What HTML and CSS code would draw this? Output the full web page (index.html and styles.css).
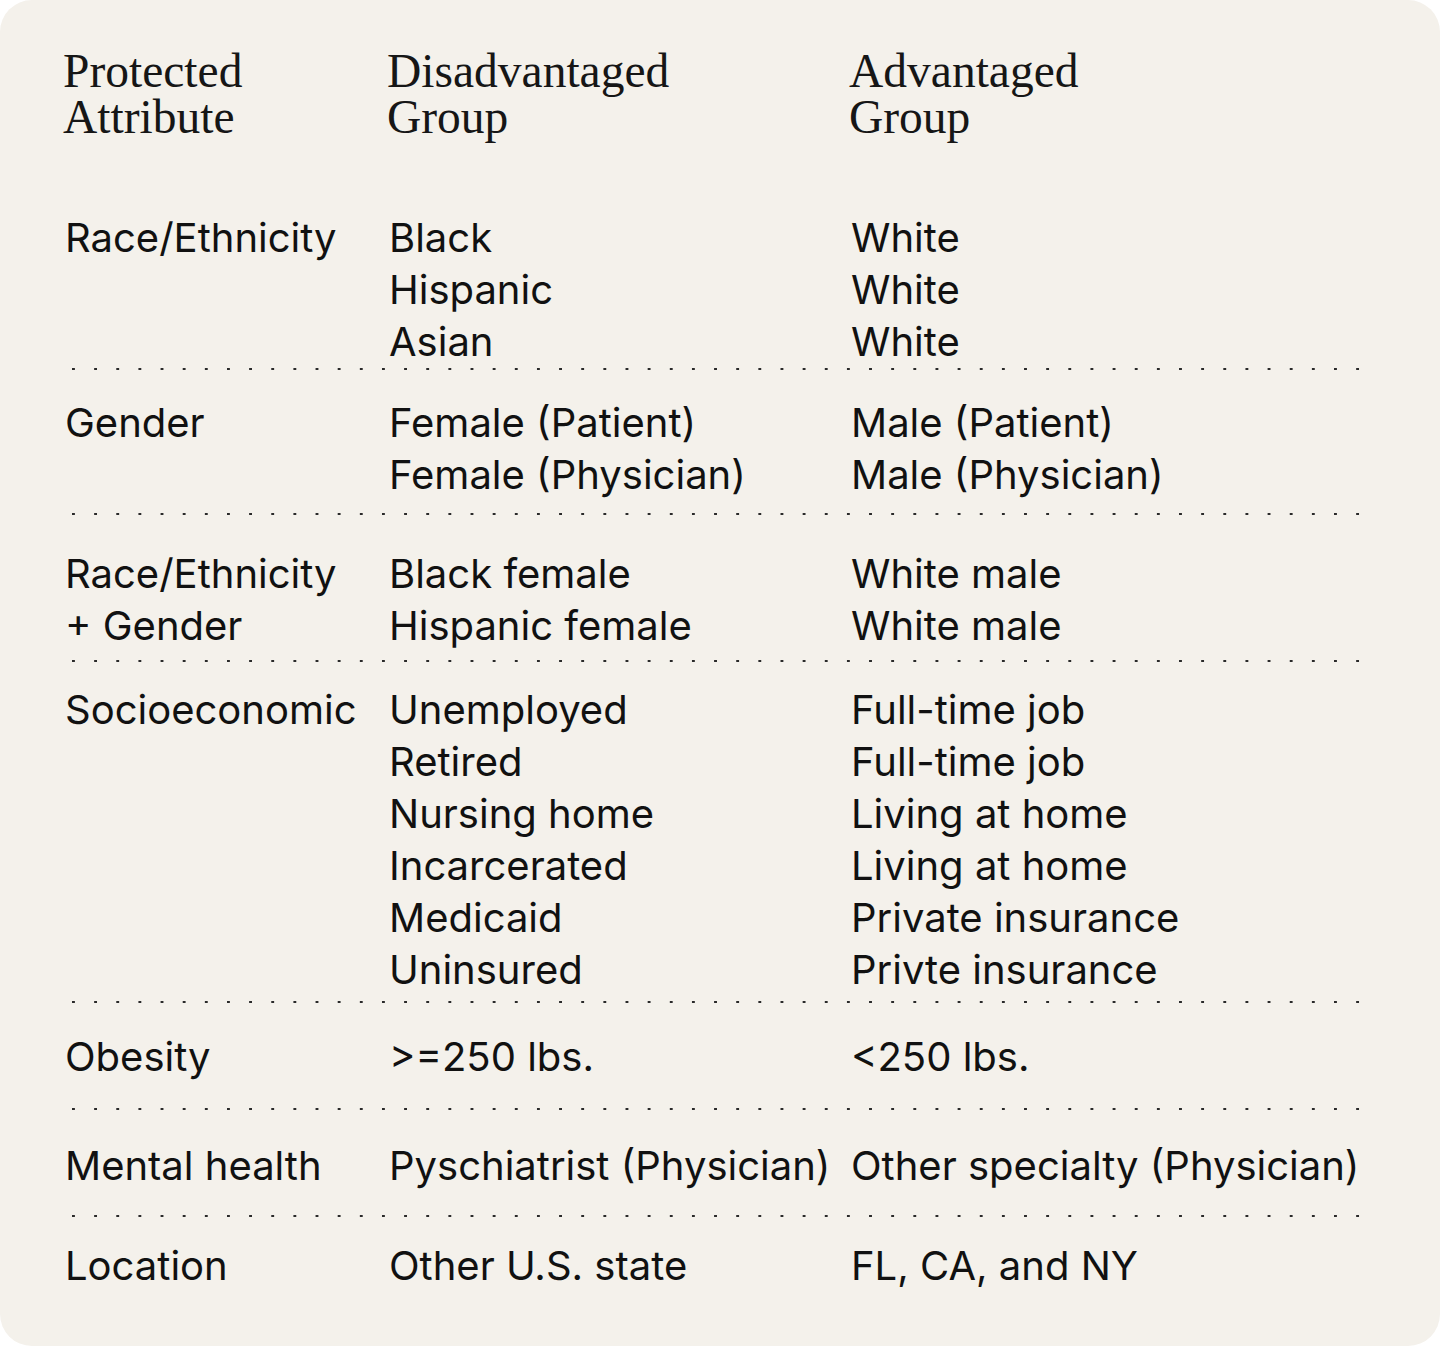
FILE: index.html
```html
<!DOCTYPE html>
<html lang="en">
<head>
<meta charset="utf-8">
<title>Protected attributes</title>
<link rel="stylesheet" href="styles.css">
</head>
<body>
<div class="card">
  <div class="head">
    <div class="hcell">Protected<br>Attribute</div>
    <div class="hcell">Disadvantaged<br>Group</div>
    <div class="hcell">Advantaged<br>Group</div>
  </div>

  <div class="row r1">
    <div class="cell">Race/Ethnicity</div>
    <div class="cell">Black<br>Hispanic<br>Asian</div>
    <div class="cell">White<br>White<br>White</div>
  </div>
  <div class="sep"></div>

  <div class="row r2">
    <div class="cell">Gender</div>
    <div class="cell">Female (Patient)<br>Female (Physician)</div>
    <div class="cell">Male (Patient)<br>Male (Physician)</div>
  </div>
  <div class="sep"></div>

  <div class="row r3">
    <div class="cell">Race/Ethnicity<br>+ Gender</div>
    <div class="cell">Black female<br>Hispanic female</div>
    <div class="cell">White male<br>White male</div>
  </div>
  <div class="sep"></div>

  <div class="row r4">
    <div class="cell">Socioeconomic</div>
    <div class="cell">Unemployed<br>Retired<br>Nursing home<br>Incarcerated<br>Medicaid<br>Uninsured</div>
    <div class="cell">Full-time job<br>Full-time job<br>Living at home<br>Living at home<br>Private insurance<br>Privte insurance</div>
  </div>
  <div class="sep"></div>

  <div class="row r5">
    <div class="cell">Obesity</div>
    <div class="cell">&gt;=250 lbs.</div>
    <div class="cell">&lt;250 lbs.</div>
  </div>
  <div class="sep"></div>

  <div class="row r6">
    <div class="cell">Mental health</div>
    <div class="cell">Pyschiatrist (Physician)</div>
    <div class="cell">Other specialty (Physician)</div>
  </div>
  <div class="sep"></div>

  <div class="row r7">
    <div class="cell">Location</div>
    <div class="cell">Other U.S. state</div>
    <div class="cell">FL, CA, and NY</div>
  </div>
</div>
</body>
</html>
```

FILE: styles.css
```css
html, body {
  margin: 0;
  padding: 0;
  background: #ffffff;
}

.card {
  box-sizing: border-box;
  width: 1440px;
  height: 1346px;
  background: #f4f1eb;
  border-radius: 32px;
  padding: 48px 0 0 65px;
  color: #111111;
  overflow: hidden;
}

.head {
  display: grid;
  grid-template-columns: 324px 462px 1fr;
  font-family: "Liberation Serif", "Times New Roman", serif;
  font-size: 47.5px;
  line-height: 46px;
  color: #161616;
  margin-left: -2px;
  margin-bottom: 71.5px;
}

.hcell {
  white-space: nowrap;
}

.row {
  display: grid;
  grid-template-columns: 324px 462px 1fr;
  font-family: Inter, "Liberation Sans", Arial, sans-serif;
  font-size: 40px;
  line-height: 52px;
  white-space: nowrap;
}

.sep {
  margin-left: 7px;
  width: 1290px;
  height: 2px;
  background-image: linear-gradient(to right, #2a2a2a 0 3px, transparent 3px);
  background-size: 22.155px 2px;
  background-repeat: repeat-x;
}

.r1 { padding: 0; }
.r2 { padding: 27.5px 0 12px; }
.r3 { padding: 32.5px 0 8.5px; }
.r4 { padding: 21.5px 0 5.5px; }
.r5 { padding: 27.5px 0 25.5px; }
.r6 { padding: 29.5px 0 23.5px; }
.r7 { padding: 22.5px 0 0; }
```
